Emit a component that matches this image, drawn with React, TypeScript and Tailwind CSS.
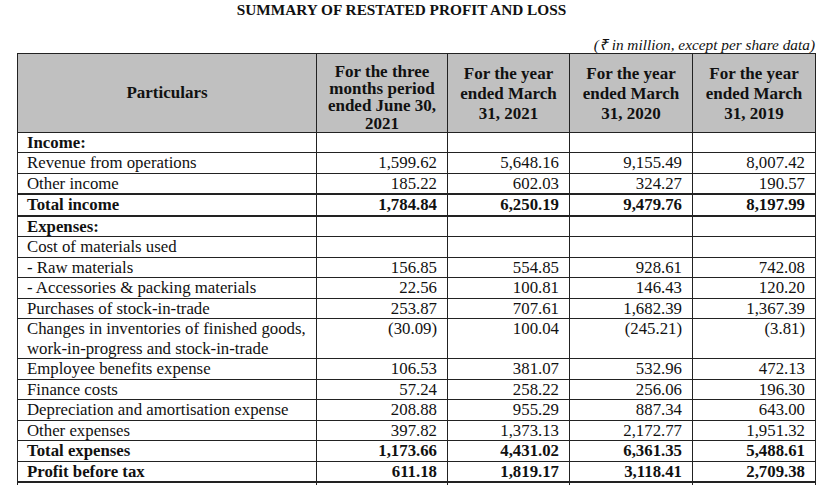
type Row = {
  label: React.ReactNode
  values?: string[]
  bold?: boolean
  thickTop?: boolean
  thickBottom?: boolean
}

const rows: Row[] = [
  { label: 'Income:', bold: true },
  { label: 'Revenue from operations', values: ['1,599.62', '5,648.16', '9,155.49', '8,007.42'] },
  { label: 'Other income', values: ['185.22', '602.03', '324.27', '190.57'] },
  {
    label: 'Total income',
    values: ['1,784.84', '6,250.19', '9,479.76', '8,197.99'],
    bold: true,
    thickTop: true,
    thickBottom: true,
  },
  { label: 'Expenses:', bold: true },
  { label: 'Cost of materials used' },
  { label: '- Raw materials', values: ['156.85', '554.85', '928.61', '742.08'] },
  { label: '- Accessories & packing materials', values: ['22.56', '100.81', '146.43', '120.20'] },
  { label: 'Purchases of stock-in-trade', values: ['253.87', '707.61', '1,682.39', '1,367.39'] },
  {
    label: (
      <>
        Changes in inventories of finished goods,
        <br />
        work-in-progress and stock-in-trade
      </>
    ),
    values: ['(30.09)', '100.04', '(245.21)', '(3.81)'],
  },
  { label: 'Employee benefits expense', values: ['106.53', '381.07', '532.96', '472.13'] },
  { label: 'Finance costs', values: ['57.24', '258.22', '256.06', '196.30'] },
  { label: 'Depreciation and amortisation expense', values: ['208.88', '955.29', '887.34', '643.00'] },
  { label: 'Other expenses', values: ['397.82', '1,373.13', '2,172.77', '1,951.32'] },
  { label: 'Total expenses', values: ['1,173.66', '4,431.02', '6,361.35', '5,488.61'], bold: true },
  {
    label: 'Profit before tax',
    values: ['611.18', '1,819.17', '3,118.41', '2,709.38'],
    bold: true,
    thickBottom: true,
  },
  { label: '' },
]

const yearHeads = ['31, 2021', '31, 2020', '31, 2019']

export default function App() {
  return (
    <div
      className="min-h-screen bg-white pt-[1px] text-[#111]"
      style={{ fontFamily: '"Liberation Serif", "Times New Roman", serif' }}
    >
      {/* Title */}
      <div className="w-[803px] text-center text-[15.3px] font-bold leading-[17px]">
        SUMMARY OF RESTATED PROFIT AND LOSS
      </div>

      {/* Unit note */}
      <div className="mt-[18px] w-[815px] text-right text-[15.3px] italic leading-[17px]">
        (₹ in million, except per share data)
      </div>

      {/* Statement table */}
      <table className="ml-[17px] w-[799px] table-fixed border-collapse">
        <colgroup>
          <col className="w-[299px]" />
          <col className="w-[131px]" />
          <col className="w-[122px]" />
          <col className="w-[123px]" />
          <col className="w-[123px]" />
        </colgroup>
        <thead>
          <tr className="h-[78px] bg-[#c0c0c0] text-[17px] font-bold">
            <th className="border border-[#222] p-0 text-center align-middle leading-[20px]">
              Particulars
            </th>
            <th className="border border-[#222] p-0 pt-[9px] text-center align-top leading-[17.2px] whitespace-nowrap">
              For the three
              <br />
              months period
              <br />
              ended June 30,
              <br />
              2021
            </th>
            {yearHeads.map((y) => (
              <th
                key={y}
                className="border border-[#222] p-0 pt-[2px] text-center align-middle leading-[19.7px] whitespace-nowrap"
              >
                For the year
                <br />
                ended March
                <br />
                {y}
              </th>
            ))}
          </tr>
        </thead>
        <tbody className="text-[16.8px] leading-[19.5px]">
          {rows.map((r, i) => {
            const edge = `border border-[#222] py-0 align-top ${r.thickTop ? 'border-t-2' : ''} ${
              r.thickBottom ? 'border-b-2' : ''
            }`
            return (
              <tr key={i} className={r.bold ? 'font-bold' : ''}>
                <td className={`${edge} pl-[9px] pr-1 text-left whitespace-nowrap`}>
                  {r.label === '' ? '\u00a0' : r.label}
                </td>
                {[0, 1, 2, 3].map((c) => (
                  <td key={c} className={`${edge} pl-1 pr-[10px] text-right whitespace-nowrap`}>
                    {r.values?.[c] ?? ''}
                  </td>
                ))}
              </tr>
            )
          })}
        </tbody>
      </table>
    </div>
  )
}
